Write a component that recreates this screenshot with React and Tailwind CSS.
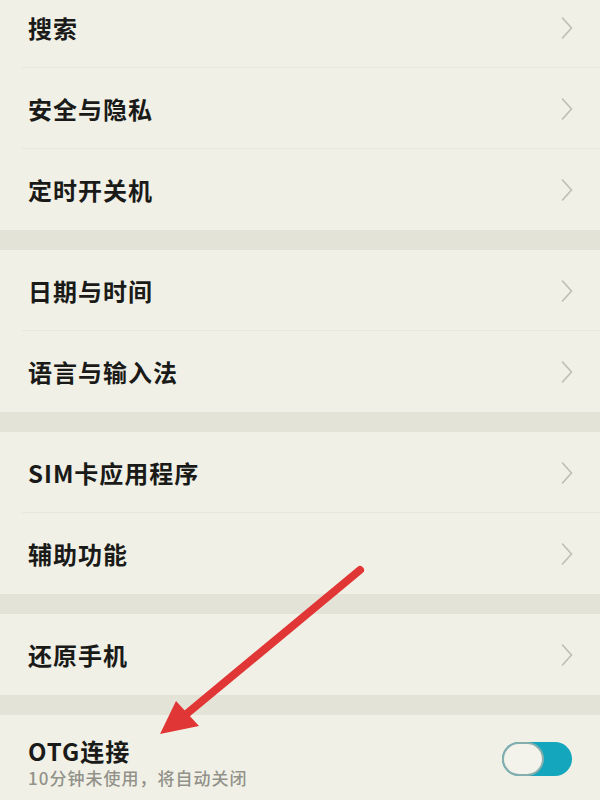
import React from 'react';

const sections = [
  ['搜索', '安全与隐私', '定时开关机'],
  ['日期与时间', '语言与输入法'],
  ['SIM卡应用程序', '辅助功能'],
  ['还原手机'],
];

function Chevron() {
  return (
    <svg width="12" height="22" viewBox="0 0 12 22" fill="none" className="shrink-0">
      <path d="M1.5 1 L10.5 11 L1.5 21" stroke="#bdbdb4" strokeWidth="1.6" strokeLinecap="round" strokeLinejoin="round" />
    </svg>
  );
}

function Row({ label, last }) {
  return (
    <div className="h-[81px] flex items-center pl-[28px] pr-[27px] relative">
      <span className="flex-1 text-[24px] tracking-[1px] font-semibold text-[#1a1a18]">{label}</span>
      <Chevron />
      {!last && <div className="absolute left-[22px] right-0 bottom-0 h-px bg-[#e7e7dd]" />}
    </div>
  );
}

export default function App() {
  return (
    <div className="relative w-full h-[800px] overflow-hidden bg-[#f0f0e6] font-['Noto_Sans_CJK_SC',sans-serif]">
      <div className="-mt-[13px]">
        {sections.map((items, si) => (
          <div key={si}>
            {items.map((label, i) => (
              <Row key={label} label={label} last={i === items.length - 1} />
            ))}
            <div className="h-[20px] bg-[#e4e3d8]" />
          </div>
        ))}
        <div className="h-[90px] flex items-center pl-[28px] pr-[28px]">
          <div className="flex-1 flex flex-col gap-[4px] pt-[6px]">
            <span className="text-[24px] tracking-[1px] font-semibold text-[#1a1a18] leading-[26px]">OTG连接</span>
            <span className="text-[17px] tracking-[1px] font-medium text-[#92928a] leading-[20px]">10分钟未使用，将自动关闭</span>
          </div>
          <div className="relative w-[70px] h-[34px] rounded-full bg-[#14a6bc] mb-[2px]">
            <div className="absolute left-0 top-0 w-[42px] h-[34px] rounded-full bg-[#f3f3ec] border-2 border-[#86aeae]" />
          </div>
        </div>
      </div>

      <svg className="absolute inset-0 pointer-events-none" width="600" height="800" viewBox="0 0 600 800">
        <line x1="360" y1="570" x2="184" y2="716" stroke="#e13636" strokeWidth="8" strokeLinecap="round" />
        <polygon points="160,734 176,701 199,726" fill="#e13636" />
      </svg>
    </div>
  );
}
